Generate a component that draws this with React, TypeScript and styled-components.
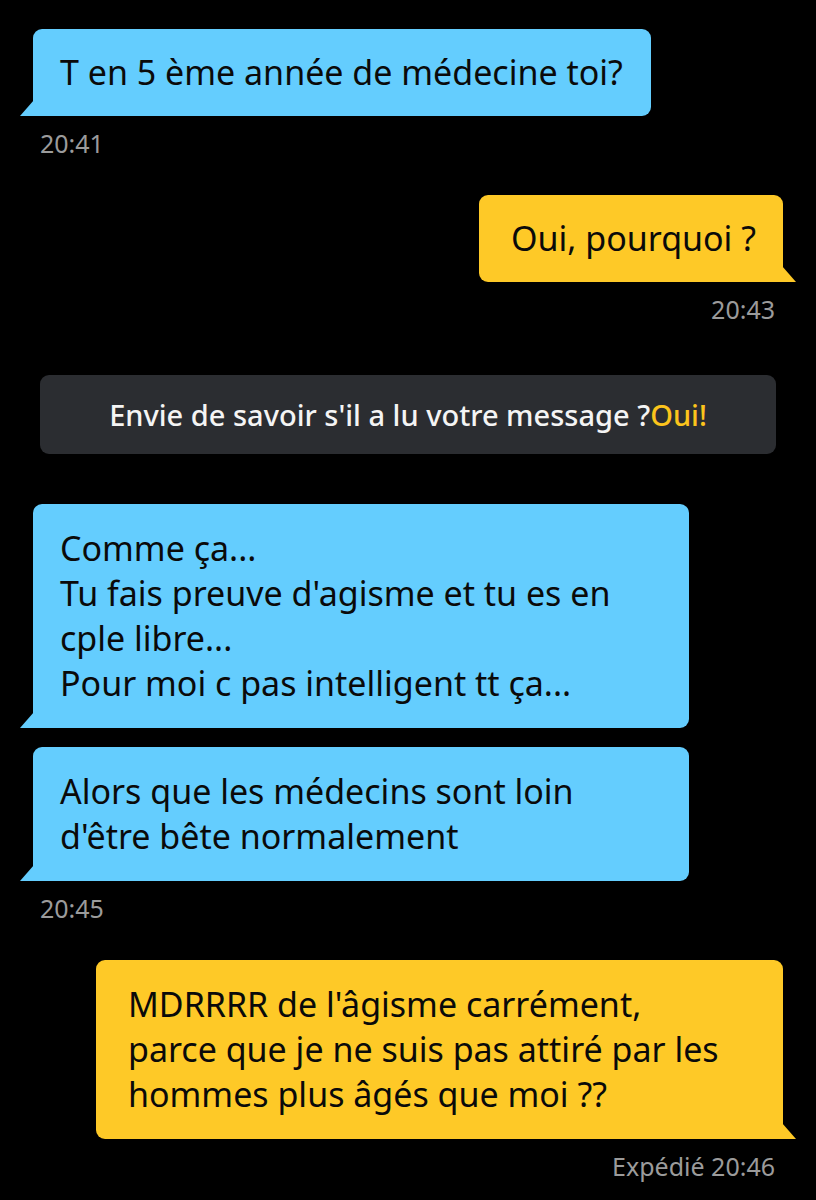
import React from "react";
import styled, { createGlobalStyle } from "styled-components";

const GlobalStyle = createGlobalStyle`
  html, body {
    margin: 0;
    padding: 0;
    background: #000000;
  }
  body {
    font-family: "Noto Sans", "Open Sans", sans-serif;
    -webkit-font-smoothing: antialiased;
  }
`;

const BLUE = "#64cdfe";
const YELLOW = "#fec927";

const StyledThread = styled.div`
  width: 816px;
  height: 1200px;
  box-sizing: border-box;
  padding: 29px 0 0;
  display: flex;
  flex-direction: column;
  background: #000000;
  overflow: hidden;
`;

const Row = styled.div<{ $side: "left" | "right"; $top?: number }>`
  display: flex;
  justify-content: ${(p) => (p.$side === "left" ? "flex-start" : "flex-end")};
  padding: ${(p) => (p.$side === "left" ? "0 0 0 33px" : "0 33px 0 0")};
  margin-top: ${(p) => p.$top ?? 0}px;
`;

const Bubble = styled.div<{ $side: "left" | "right"; $width?: number; $pad?: number }>`
  position: relative;
  box-sizing: border-box;
  width: ${(p) => (p.$width ? `${p.$width}px` : "auto")};
  padding: ${(p) => p.$pad ?? 21}px
    ${(p) => (p.$side === "left" ? "28px" : "27px")}
    ${(p) => p.$pad ?? 21}px
    ${(p) => (p.$side === "left" ? "27px" : "32px")};
  background: ${(p) => (p.$side === "left" ? BLUE : YELLOW)};
  color: #0a0a0a;
  font-size: 34px;
  line-height: 45px;
  white-space: nowrap;
  border-radius: ${(p) => (p.$side === "left" ? "9px 9px 9px 0" : "9px 9px 0 9px")};

  &::after {
    content: "";
    position: absolute;
    bottom: 0;
    width: 14px;
    height: 16px;
    background: inherit;
    ${(p) =>
      p.$side === "left"
        ? "left: -13px; clip-path: polygon(0 100%, 100% 0, 100% 100%);"
        : "right: -13px; clip-path: polygon(0 0, 100% 100%, 0 100%);"}
  }
`;

const Time = styled.div<{ $side: "left" | "right" }>`
  margin-top: 12px;
  padding: ${(p) => (p.$side === "left" ? "0 0 0 40px" : "0 41px 0 0")};
  text-align: ${(p) => p.$side};
  color: #9b9b9b;
  font-size: 25px;
  line-height: 30px;
`;

const Banner = styled.div`
  margin: 51px 40px 0;
  height: 79px;
  border-radius: 9px;
  background: #2b2d31;
  display: flex;
  align-items: center;
  justify-content: center;
  color: #f4f4f4;
  font-size: 29px;
  font-weight: 500;
`;

const Accent = styled.span`
  color: #fcc41c;
`;

export default function App() {
  return (
    <>
      <GlobalStyle />
      <StyledThread>
        <Row $side="left">
          <Bubble $side="left">T en 5 ème année de médecine toi?</Bubble>
        </Row>
        <Time $side="left">20:41</Time>

        <Row $side="right" $top={37}>
          <Bubble $side="right">Oui, pourquoi ?</Bubble>
        </Row>
        <Time $side="right">20:43</Time>

        <Banner>
          Envie de savoir s'il a lu votre message ?<Accent>Oui!</Accent>
        </Banner>

        <Row $side="left" $top={50}>
          <Bubble $side="left" $width={656} $pad={22}>
            Comme ça...
            <br />
            Tu fais preuve d'agisme et tu es en
            <br />
            cple libre...
            <br />
            Pour moi c pas intelligent tt ça...
          </Bubble>
        </Row>
        <Row $side="left" $top={19}>
          <Bubble $side="left" $width={656} $pad={22}>
            Alors que les médecins sont loin
            <br />
            d'être bête normalement
          </Bubble>
        </Row>
        <Time $side="left">20:45</Time>

        <Row $side="right" $top={37}>
          <Bubble $side="right" $width={687} $pad={22}>
            MDRRRR de l'âgisme carrément,
            <br />
            parce que je ne suis pas attiré par les
            <br />
            hommes plus âgés que moi ??
          </Bubble>
        </Row>
        <Time $side="right">Expédié 20:46</Time>
      </StyledThread>
    </>
  );
}
